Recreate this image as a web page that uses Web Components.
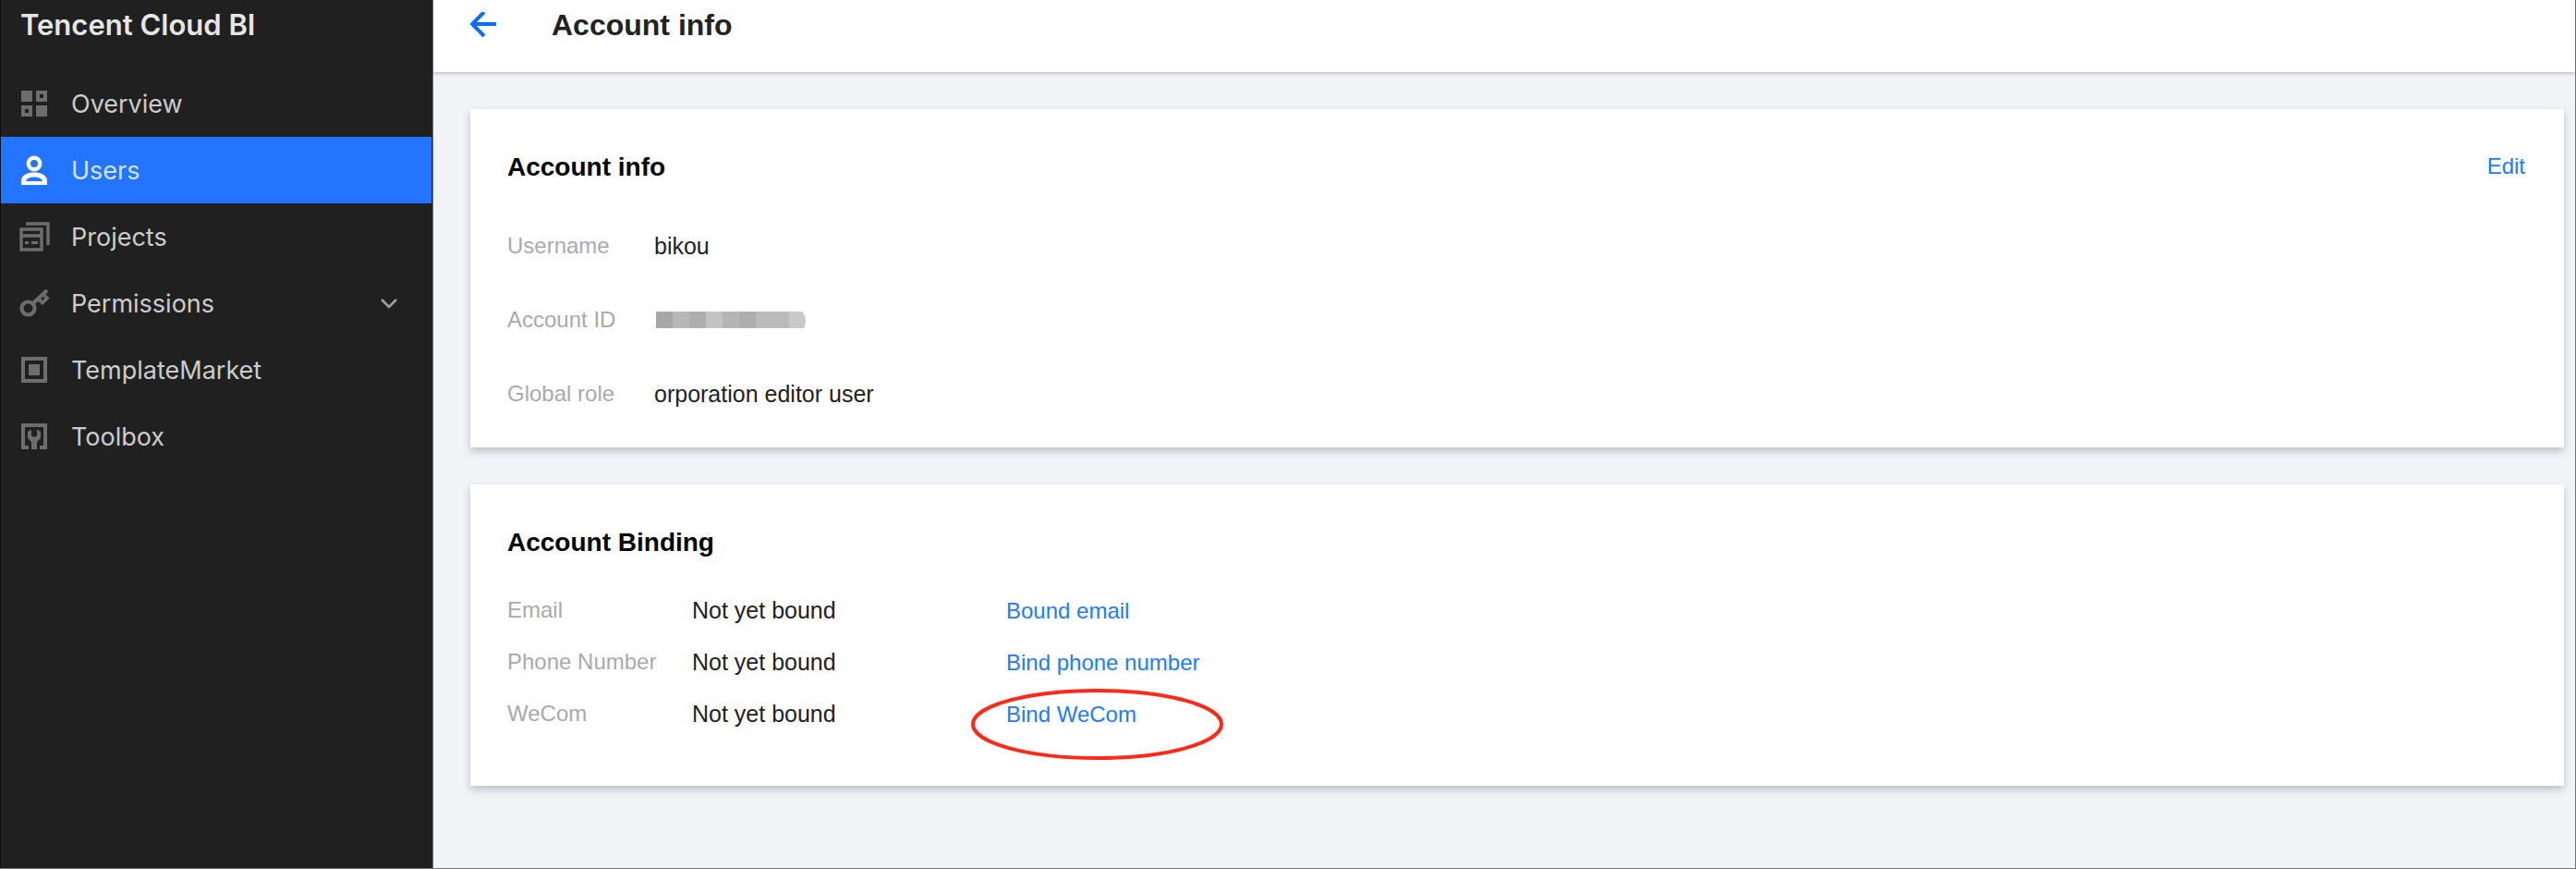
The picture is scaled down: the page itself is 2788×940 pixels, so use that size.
<!DOCTYPE html>
<html lang="en">
<head>
<meta charset="utf-8">
<title>Tencent Cloud BI - Account info</title>
<style>
  html, body { margin: 0; min-height: 100%; }
  body {
    --link: #227aff;
    --muted: #aaaaaa;
    background: #f2f3f7;
    font-family: "Liberation Sans", Arial, sans-serif;
    color: #222222;
  }
</style>
</head>
<body>
<bi-app></bi-app>

<script>
function define(name, html) {
  const template = document.createElement('template');
  template.innerHTML = html;
  customElements.define(name, class extends HTMLElement {
    constructor() {
      super();
      this.attachShadow({ mode: 'open' }).append(template.content.cloneNode(true));
    }
  });
}

/* Icons, drawn on a 28 x 28 grid */
const ICONS = {
  overview: '<path fill-rule="evenodd" d="M0 0h12v12H0zM16 0h12v12H16zM20 4v4h4V4zM0 16h12v12H0zM4 20v4h4v-4zM16 16h12v12H16z"/>',
  users: '<circle cx="14" cy="7" r="6.2" fill="none" stroke="currentColor" stroke-width="4.400"/><path fill-rule="evenodd" d="M0 30V26C0 19 7 16.500 14 16.500S28 19 28 26v4zM5 26h18C21.500 22.500 18 21.500 14 21.500S6.500 22.500 5 26z"/>',
  projects: '<g fill="none" stroke="currentColor" stroke-width="3.400"><path d="M0 6h22v22H0zM0 13h22"/><path d="M5 0h24v23"/></g><path d="M4 19h4v3H4zM11 19h7v3h-7z"/>',
  permissions: '<g fill="none" stroke="currentColor" stroke-width="4.200"><circle cx="7.500" cy="19.500" r="7"/><path d="M13 14L28 0"/><path stroke-width="3.800" d="M18.500 9.500l4.500 4 5-5-4-4"/></g>',
  template: '<path fill-rule="evenodd" d="M0 0h28v28H0zM4 4v20h20V4z"/><path d="M8 8h12v12H8z"/>',
  toolbox: '<path d="M0 0h28v28h-8v-4h4V4H4v20h4v4H0z"/><path d="M7 9l4-2.500V13l1.500 1.500h3L17 13V6.500L21 9v7l-4 4v8h-6v-8l-4-4z"/>'
};

class BiNavItem extends HTMLElement {
  connectedCallback() {
    if (this.shadowRoot) return;
    const active = this.hasAttribute('active');
    this.attachShadow({ mode: 'open' }).innerHTML = `
      <style>
        :host { display: block; }
        a {
          display: flex; align-items: center; gap: 26px;
          height: 72px; padding: 0 38px 0 22px;
          color: #cccccc; text-decoration: none;
          font: 400 27px/36px Inter, sans-serif;
        }
        a.active { background: #2374ff; color: #d3e3ff; }
        .icon { flex: none; width: 28px; height: 28px; overflow: visible; color: #6d6d6d; fill: currentColor; }
        .active .icon { color: #ffffff; }
        .label { flex: 1; padding-top: 2px; }
        .chevron { width: 16px; height: 10px; fill: none; stroke: #a0a0a0; stroke-width: 2.500; overflow: visible; }
      </style>
      <a href="#${this.getAttribute('icon')}" ${active ? 'class="active" aria-current="page"' : ''}>
        <svg class="icon" viewBox="0 0 28 28" aria-hidden="true">${ICONS[this.getAttribute('icon')]}</svg>
        <span class="label"><slot></slot></span>
        ${this.hasAttribute('expandable') ? '<svg class="chevron" viewBox="0 0 16 10" aria-hidden="true"><path d="M0 1l8 8 8-8"/></svg>' : ''}
      </a>`;
  }
}
customElements.define('bi-nav-item', BiNavItem);

define('bi-sidebar', `
  <style>
    :host {
      display: block; box-sizing: border-box;
      background: #202020; border: 1px solid #101010; border-width: 0 1px 0 1px; border-right-color: #6a6a6a;
    }
    h1 { margin: 0 0 22px; padding-left: 21px; font: 600 31px/54px Inter, sans-serif; color: #e6e6e6; }
    nav { padding-right: 1px; }
  </style>
  <h1>Tencent Cloud BI</h1>
  <nav aria-label="Main">
    <bi-nav-item icon="overview">Overview</bi-nav-item>
    <bi-nav-item icon="users" active>Users</bi-nav-item>
    <bi-nav-item icon="projects">Projects</bi-nav-item>
    <bi-nav-item icon="permissions" expandable>Permissions</bi-nav-item>
    <bi-nav-item icon="template">TemplateMarket</bi-nav-item>
    <bi-nav-item icon="toolbox">Toolbox</bi-nav-item>
  </nav>`);

define('bi-page-header', `
  <style>
    :host {
      display: flex; align-items: center; gap: 60px;
      padding: 0 40px 24px; background: #ffffff;
      box-shadow: 0 1px 4px rgba(40, 44, 60, .35);
    }
    button { display: block; padding: 0; border: 0; background: none; color: #0a6eff; cursor: pointer; }
    svg { display: block; width: 28px; height: 28px; fill: none; stroke: currentColor; stroke-width: 4; }
    h2 { margin: 0; font-size: 32px; line-height: 54px; font-weight: 700; color: #222222; }
  </style>
  <button type="button" aria-label="Back">
    <svg viewBox="0 0 28 28" aria-hidden="true"><path d="M28 13H3M15 0L2 13l13 13"/></svg>
  </button>
  <h2><slot></slot></h2>`);

define('bi-card', `
  <style>
    :host {
      display: block; padding: 40px 42px 0 40px; background: #ffffff;
      box-shadow: 0 4px 8px rgba(54, 58, 80, .28);
    }
    header { display: flex; justify-content: space-between; align-items: flex-start; margin-bottom: 22px; }
    h3 { margin: 0; font-size: 28px; line-height: 46px; font-weight: 700; color: #000000; }
  </style>
  <header><h3><slot name="title"></slot></h3><slot name="action"></slot></header>
  <slot></slot>`);

define('bi-masked-value', `
  <style>
    :host { display: block; }
    svg { display: block; width: 164px; height: 18px; }
  </style>
  <svg viewBox="0 0 164 18" role="img" aria-label="Hidden">
    <path fill="#a7a7a7" d="M2 0h18v18H2z"/><path fill="#b7b7b7" d="M20 0h18v18H20z"/>
    <path fill="#aeaeae" d="M38 0h18v18H38z"/><path fill="#c3c3c3" d="M56 0h18v18H56z"/>
    <path fill="#b5b5b5" d="M74 0h18v18H74z"/><path fill="#aeaeae" d="M92 0h18v18H92z"/>
    <path fill="#bababa" d="M110 0h36v18h-36z"/><path fill="#c9c9c9" d="M146 0h14q4 4 4 10 0 5-2 8h-16z"/>
  </svg>`);

define('bi-account-info', `
  <style>
    :host { display: block; }
    button { padding: 0; border: 0; background: none; color: var(--link); font: inherit; font-size: 24px; line-height: 44px; cursor: pointer; }
    dl { margin: 0; padding-bottom: 18px; }
    dl div { display: grid; grid-template-columns: 159px 1fr; align-items: center; height: 80px; }
    dt { font-size: 24px; line-height: 32px; color: var(--muted); }
    dd { margin: 0; font-size: 25px; line-height: 32px; }
  </style>
  <bi-card>
    <span slot="title">Account info</span>
    <button slot="action" type="button">Edit</button>
    <dl>
      <div><dt>Username</dt><dd>bikou</dd></div>
      <div><dt>Account ID</dt><dd><bi-masked-value></bi-masked-value></dd></div>
      <div><dt>Global role</dt><dd>orporation editor user</dd></div>
    </dl>
  </bi-card>`);

define('bi-account-binding', `
  <style>
    :host { display: block; }
    .body { padding-bottom: 50px; }
    table { width: 100%; table-layout: fixed; border-collapse: collapse; }
    .name { width: 200px; }
    .state { width: 340px; }
    th, td { height: 56px; padding: 0; text-align: left; font-size: 25px; line-height: 32px; }
    th { font-size: 24px; font-weight: 400; color: var(--muted); }
    a { position: relative; color: var(--link); font-size: 24px; text-decoration: none; }
    .mark {
      position: absolute; left: -38px; top: -14px; width: 273px; height: 77px;
      fill: none; stroke: #ff2a1a; stroke-width: 4; pointer-events: none;
    }
  </style>
  <bi-card>
    <span slot="title">Account Binding</span>
    <div class="body">
      <table>
        <colgroup><col class="name"><col class="state"><col></colgroup>
        <tbody>
          <tr><th scope="row">Email</th><td>Not yet bound</td><td><a href="#email">Bound email</a></td></tr>
          <tr><th scope="row">Phone Number</th><td>Not yet bound</td><td><a href="#phone">Bind phone number</a></td></tr>
          <tr><th scope="row">WeCom</th><td>Not yet bound</td><td><a href="#wecom">Bind WeCom<svg class="mark" viewBox="0 0 273 77" aria-hidden="true"><ellipse cx="136.500" cy="38.500" rx="134.500" ry="36.500"/></svg></a></td></tr>
        </tbody>
      </table>
    </div>
  </bi-card>`);

define('bi-app', `
  <style>
    :host {
      display: grid; grid-template-columns: 469px minmax(0, 1fr);
      box-sizing: border-box; min-height: 100vh;
      border: 1px solid #747474; border-width: 0 1px 1px 0;
    }
    .content { display: grid; gap: 40px; padding: 40px 12px 40px 40px; }
  </style>
  <bi-sidebar></bi-sidebar>
  <main>
    <bi-page-header>Account info</bi-page-header>
    <div class="content">
      <bi-account-info></bi-account-info>
      <bi-account-binding></bi-account-binding>
    </div>
  </main>`);
</script>
</body>
</html>
